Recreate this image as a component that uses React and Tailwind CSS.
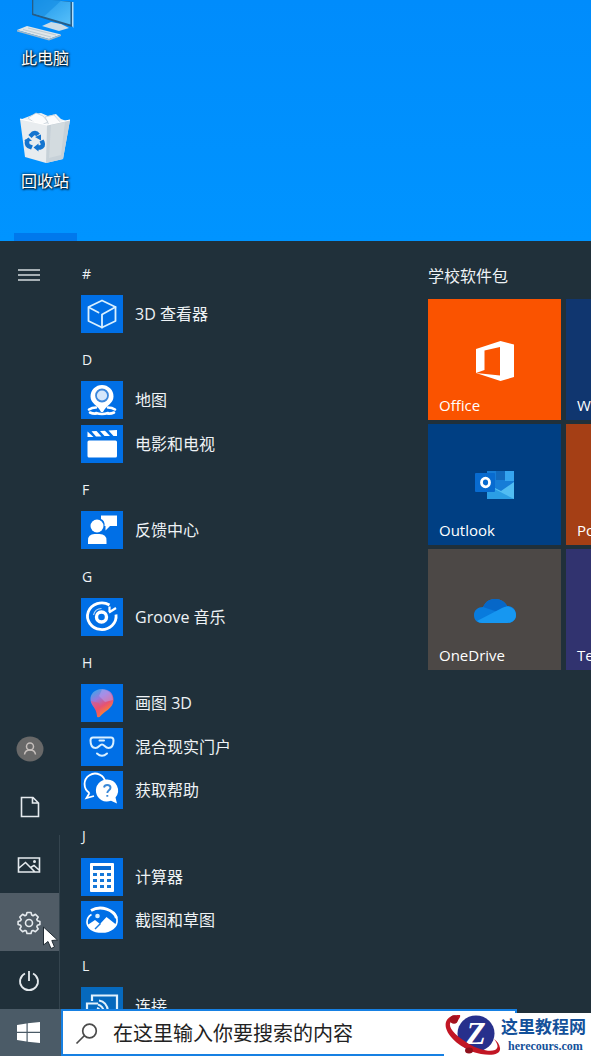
import React from "react";

const stroke = { fill: "none", stroke: "#fff", strokeWidth: 2, strokeLinejoin: "round", strokeLinecap: "round" };

/* App glyphs share a 42 x 38 canvas, the size of the blue plate. */
const glyphs = {
  viewer: (
    <g {...stroke} stroke="#d9f0ff" strokeWidth="1.8">
      <path d="M21 5.500 34.500 12V26L21 32.500 7.500 26V12Z" />
      <path d="M34.500 12 21 19.500V32.500M8 12.500 17.500 17.500" />
    </g>
  ),
  maps: (
    <g>
      <g stroke="#fff" strokeWidth="2.600" strokeLinecap="round" fill="none">
        <path d="M8 28.500Q11 26.500 15 26.500M27 26.500Q31 26.500 34 28.500M9 31.500Q12 33 16 32.500M33 31.500Q30 33 26 32.500M15 32Q21 34 27 32" />
      </g>
      <path d="M21 4a11.500 11.500 0 0 0-11.500 11.500C9.500 23 17 24 20 31h2C25 24 32.500 23 32.500 15.500A11.500 11.500 0 0 0 21 4Z" fill="#fff" />
      <circle cx="21" cy="14.500" r="6" fill="#d5e7fb" stroke="#3b87dc" strokeWidth="1.800" />
    </g>
  ),
  movies: (
    <g fill="#fff">
      <rect x="6.500" y="15.500" width="29.500" height="17" rx="1.500" />
      <path d="M6.500 6.500 12.500 12H6.500ZM10.500 6.200 15.500 6 20.500 11.500H15ZM19 5.900 24 5.700 29 11H23.500ZM27.500 5.500 36 5V11H32.500Z" />
    </g>
  ),
  feedback: (
    <g fill="#fff">
      <circle cx="16" cy="15" r="6.500" />
      <path d="M7 33v-3.500q0-6.500 6.500-6.500h5Q25.500 23 25.500 29.500V33Z" />
      <path d="M20 4.500H36V15H29L24.500 19.500V15H23.500Q24 9.500 20 8Z" />
    </g>
  ),
  groove: (
    <g fill="none" stroke="#fff">
      <path d="M28.500 7A14.300 13.300 0 1 0 35 16.500" strokeWidth="2.800" />
      <circle cx="20.500" cy="19" r="5" strokeWidth="3.400" />
      <path d="M28.500 8.500V14M28 14.500 35 10" strokeWidth="2.200" />
      <path d="M12.500 17A8.500 8.500 0 0 1 20.500 10.500" strokeWidth="1.200" opacity=".7" />
    </g>
  ),
  paint: (
    <g>
      <defs>
        <linearGradient id="balloon" x1="0" y1="0" x2=".5" y2="1">
          <stop offset="0" stopColor="#24b3ef" />
          <stop offset=".4" stopColor="#9878dc" />
          <stop offset=".68" stopColor="#e65273" />
          <stop offset="1" stopColor="#ff8a24" />
        </linearGradient>
      </defs>
      <path d="M21 5C13.500 5 9 10 9.500 16c.5 6 6 7.500 6.500 16 .2 1.800 2 1.500 3 .5 4-5 13-8 13.500-16C33 10 28.500 5 21 5Z" fill="url(#balloon)" />
      <path d="M21 5.500c5.500 0 10.500 4 11 10.500l-8 2-6-6Z" fill="#b9a2ef" opacity=".5" />
      <path d="M10 17l8 2 1 13-2.500 1C16 24 11 23 10 17Z" fill="#f24d67" opacity=".5" />
    </g>
  ),
  reality: (
    <g fill="none" stroke="#d9f0ff" strokeWidth="2" strokeLinecap="round">
      <path d="M12 9.500H30q2.500 0 2.500 3c0 5-2 7.500-5 7.500-3.500 0-4-3.500-6.500-3.500S18 20 14.500 20c-3 0-5-2.500-5-7.500 0-2 .7-3 2.500-3Z" />
      <path d="M18.500 12.500h4.500M16 25.500Q21 30 26 25.500" />
    </g>
  ),
  help: (
    <g>
      <path d="M8.500 22A10.500 10.500 0 1 1 24.500 12M8.500 22 5.500 27 13 25" fill="none" stroke="#fff" strokeWidth="1.800" />
      <path d="M26 8.500a11 11 0 1 0 4 21.200L36 32.500 34.500 26.500A11 11 0 0 0 26 8.500Z" fill="#fff" />
      <path d="M23 16.500q.5-2.500 3.200-2.500 3.300 0 3.300 2.800c0 2.500-3.200 2.500-3.200 5.200M26.300 24v1.800" fill="none" stroke="#3a88d8" strokeWidth="1.900" />
    </g>
  ),
  calculator: (
    <g>
      <rect x="9" y="5" width="24" height="29" rx="1" fill="#fff" />
      <rect x="12" y="8" width="18" height="4" fill="#086ad1" />
      <g fill="#1678d8">
        <path d="M12 15h4v3h-4zM19 15h4v3h-4zM26 15h4v3h-4zM12 21h4v3h-4zM19 21h4v3h-4zM26 21h4v3h-4zM12 27h4v3h-4zM19 27h4v3h-4zM26 27h4v3h-4z" />
      </g>
    </g>
  ),
  snip: (
    <g>
      <path d="M12.500 8.500C21 5 34 9 36 18c1 8-7 13-15 13-9 0-15-4-15-10 0-3 2-6 4.500-7.500" fill="none" stroke="#fff" strokeWidth="1.700" />
      <path d="M10 9.500C20 4 33 9 35.500 17" fill="none" stroke="#fff" strokeWidth="3" />
      <path d="M6.500 24 14 19l5 4 6.500-7L35 23.500C31 33 12 34 6.500 24Z" fill="#fff" />
      <path d="m14 28 5.500-5.500" stroke="#1478dc" strokeWidth="1.500" />
      <circle cx="16.500" cy="15" r="2.300" fill="#d9efff" />
    </g>
  ),
  connect: (
    <g fill="none" stroke="#e2f1fc" strokeWidth="2.200">
      <path d="M11 14V8.500H36V29H27M17 16.500H6V29H17" />
      <path d="M18 13.500Q26 15 27 24M17 17.500Q22 19 23 25M16 21q3 1 3.500 5" strokeWidth="2" />
    </g>
  ),
};

const rows = [
  { header: "#" },
  { name: "3D 查看器", icon: "viewer" },
  { header: "D" },
  { name: "地图", icon: "maps" },
  { name: "电影和电视", icon: "movies" },
  { header: "F" },
  { name: "反馈中心", icon: "feedback" },
  { header: "G" },
  { name: "Groove 音乐", icon: "groove" },
  { header: "H" },
  { name: "画图 3D", icon: "paint" },
  { name: "混合现实门户", icon: "reality" },
  { name: "获取帮助", icon: "help" },
  { header: "J" },
  { name: "计算器", icon: "calculator" },
  { name: "截图和草图", icon: "snip" },
  { header: "L" },
  { name: "连接", icon: "connect" },
];

function ComputerIcon() {
  return (
    <svg width="60" height="42" viewBox="0 0 60 42" aria-hidden="true">
      <defs>
        <linearGradient id="screen" x1="0" y1="0" x2="1" y2="1">
          <stop offset="0" stopColor="#1793ea" />
          <stop offset="1" stopColor="#58c0fa" />
        </linearGradient>
      </defs>
      <path d="M36 22 46 24 54 28 44 31 27 26Z" fill="#c9dce8" />
      <path d="M17-2 58 2 57 27 17 15Z" fill="#265d87" />
      <path d="M18.500-2 55.500 2V24.500L18.500 13.500Z" fill="url(#screen)" />
      <path d="M18.500-2H49L29 16.500 18.500 13.500Z" fill="#168de4" opacity=".65" />
      <path d="M57 2h1.500v26L57 26Z" fill="#b0dcf8" />
      <path d="m2 30 10-4 34 8.500L34 39Z" fill="#e0e6e9" />
      <path d="m2 30 32 9 12-4.500V36l-12 4.500L2 31.500Z" fill="#a6bac7" />
      <path d="m8 29.500 28 7.500M13 28l28 7" stroke="#bccbd3" strokeWidth="1" />
    </svg>
  );
}

function BinIcon() {
  return (
    <svg width="52" height="54" viewBox="0 0 52 54" aria-hidden="true">
      <path d="m3 8 13-5 6-1 7 3 8-2 5 5 8 3-10 8-32-3Z" fill="#eef2f5" />
      <path d="m9 7 8-5 7 3 5 6-9 4ZM26 6l9-2 7 8-11 4Z" fill="#fbfcfd" stroke="#c8d1d8" strokeWidth=".8" />
      <path d="M1 8 28 14 51 9 44 48 27 52 6 46Z" fill="#e8ecef" />
      <path d="M28 14 51 9 44 48 27 52Z" fill="#c7d1d8" />
      <path d="M32 14 46 11 42 44 30 47Z" fill="#dbe1e5" opacity=".6" />
      <path d="M1 8 28 14 51 9" fill="none" stroke="#fff" strokeWidth="1.200" />
      <g fill="none" stroke="#1474cf" strokeWidth="4.500">
        <path d="M11 25.500 14 22.500q3-1.500 5 1.500M8.500 29q-1.500 4 1 6l3.500 1.500M18 36.500h3q4-1 2.500-5l-1-2" />
      </g>
      <path d="m16 26 6-2.500v6ZM5 30l4.500-3.500 3.500 3.500ZM19.500 32.500v8l-5-4Z" fill="#1474cf" />
    </svg>
  );
}

function DesktopItem({ label, children }) {
  return (
    <button className="flex w-[90px] flex-col items-center gap-1 text-base leading-6 text-white [text-shadow:1px_1px_2px_#000,0_0_3px_#000]">
      {children}
      <span>{label}</span>
    </button>
  );
}

function AppRow({ name, icon }) {
  return (
    <li className="flex items-center">
      <button className="flex items-center gap-3 whitespace-nowrap text-base leading-6 text-[#eef2f5]">
        <svg
          width="42"
          height="38"
          viewBox="0 0 42 38"
          aria-hidden="true"
          className={icon === "connect" ? "bg-[#0669bd]" : "bg-[#006fe6]"}
        >
          {glyphs[icon]}
        </svg>
        <span>{name}</span>
      </button>
    </li>
  );
}

function RailButton({ label, active, children }) {
  return (
    <button
      aria-label={label}
      className={`relative flex h-[58px] w-full items-center justify-center pr-px pt-0.5 ${active ? "bg-[#505c66]" : ""}`}
    >
      {children}
    </button>
  );
}

function Rail() {
  const line = { fill: "none", stroke: "#e5eaee", strokeWidth: 1.6 };
  return (
    <nav aria-label="开始" className="flex w-[60px] shrink-0 flex-col justify-between">
      <button aria-label="展开" className="flex h-[68px] items-center justify-center pr-0.5">
        <svg width="22" height="14" viewBox="0 0 22 14" aria-hidden="true">
          <path d="M0 2H22M0 7H22M0 12H22" stroke="#d4dade" strokeWidth="1.500" />
        </svg>
      </button>
      <div>
        <RailButton label="用户">
          <svg width="28" height="26" viewBox="0 0 28 26" aria-hidden="true">
            <ellipse cx="14" cy="13" rx="13.500" ry="12.500" fill="#686868" />
            <g fill="none" stroke="#c5bebb" strokeWidth="1.500">
              <circle cx="14" cy="10.500" r="3.500" />
              <path d="M8.500 18.500Q9 14 14 14t5.500 4.500" />
            </g>
          </svg>
        </RailButton>
        <RailButton label="文档">
          <svg width="20" height="22" viewBox="0 0 20 22" aria-hidden="true" {...line}>
            <path d="M1.500 1.500H13L18.500 7V20.500H1.500ZM12.500 1.500V7H18.500" />
          </svg>
        </RailButton>
        <div className="border-r border-[#34444e]">
          <RailButton label="图片">
            <svg width="24" height="18" viewBox="0 0 24 18" aria-hidden="true" {...line}>
              <path d="M1.500 2H22.500V16H1.500ZM2 12 8.500 6.500 18 16M13.500 11.500 17 9.500 22 14" />
              <circle cx="17.500" cy="5.500" r=".7" />
            </svg>
          </RailButton>
          <RailButton label="设置" active>
            <svg width="24" height="24" viewBox="0 0 24 24" aria-hidden="true" {...line}>
              <path d="m9.300 4.100.7-2.600h4l.7 2.600 1.300.6 2.400-1.400 2.800 2.800-1.400 2.300.6 1.400 2.500.7v3l-2.500.8-.6 1.400 1.400 2.300-2.800 2.700-2.400-1.300-1.300.6-.7 2.500h-4l-.7-2.500-1.300-.6-2.400 1.300-2.800-2.700 1.400-2.300-.6-1.400-2.500-.8v-3l2.500-.7.6-1.400-1.400-2.300 2.800-2.800L8 4.700Z" strokeLinejoin="round" />
              <circle cx="12" cy="12" r="3.500" />
            </svg>
            <svg width="17" height="24" viewBox="0 0 17 24" aria-hidden="true" className="absolute left-[42px] top-[33px] z-10">
              <path d="M1.500 1V19L6 15.500 9 22.500 12.500 21 9.800 14.500 15.500 14Z" fill="#fff" stroke="#222d35" />
            </svg>
          </RailButton>
          <RailButton label="电源">
            <svg width="22" height="22" viewBox="0 0 22 22" aria-hidden="true" {...line} strokeWidth="1.800">
              <path d="M7 3.500A9 8.800 0 1 0 15 3.500M11 1V11" />
            </svg>
          </RailButton>
        </div>
      </div>
    </nav>
  );
}

function Tile({ label, color, children }) {
  return (
    <button className={`flex h-[121px] flex-col justify-between px-[11px] pb-[5px] text-left text-[15px] leading-5 text-white ${color}`}>
      <span className="flex w-full flex-1 items-center justify-center pt-[27px]">{children}</span>
      <span>{label}</span>
    </button>
  );
}

function Tiles() {
  return (
    <section className="min-w-0 flex-1 overflow-hidden pt-[23px]">
      <h2 className="mb-[11px] text-base leading-6 text-[#eef2f5]">学校软件包</h2>
      <div className="grid grid-cols-[133px_133px] gap-x-[5px] gap-y-1">
        <Tile label="Office" color="bg-[#fa5300]">
          <svg width="40" height="42" viewBox="0 0 40 42" aria-hidden="true">
            <path d="M1 9 25.500 1 39 4.500V37L25.500 41 1 33 25 35.500V7L9.500 10.500V30L1 33Z" fill="#fff" />
          </svg>
        </Tile>
        <Tile label="Word" color="bg-[#10366f]" />
        <Tile label="Outlook" color="bg-[#003f83]">
          <svg width="40" height="32" viewBox="0 0 40 32" aria-hidden="true">
            <path d="M12 1H39V29H12Z" fill="#167dd7" />
            <path d="M21 1h9v9h-9z" fill="#1269bd" />
            <path d="M30 1h9v10h-9z" fill="#35a4ef" />
            <path d="M12 14 26 21 39 12V29H12Z" fill="#51bdf3" />
            <path d="m12 15 27 14H12Z" fill="#2b9ee4" />
            <rect x="0" y="3" width="20" height="19" rx="1" fill="#086bd0" />
            <ellipse cx="10.500" cy="12.500" rx="4" ry="4.300" fill="none" stroke="#fff" strokeWidth="2.800" />
          </svg>
        </Tile>
        <Tile label="PowerPoint" color="bg-[#a53f15]" />
        <Tile label="OneDrive" color="bg-[#4c4846]">
          <svg width="44" height="26" viewBox="0 0 44 26" aria-hidden="true">
            <path d="M9 25C3 25 1 21 1 17c0-5 4-8 9-8C13 3 17 1 22 1c6 0 10 3 12 7 6 0 9 4 9 9 0 5-4 8-9 8Z" fill="#087bdd" />
            <path d="M10 9C13 3 17 1 22 1c6 0 10 3 12 7l-9 6Z" fill="#0667c8" />
            <path d="M4 23 29 10q3-2 6-1.500c5 1 8 4 8 8.500 0 5-4 8-9 8H9q-3 0-5-2Z" fill="#1697f1" />
          </svg>
        </Tile>
        <Tile label="Teams" color="bg-[#31336f]" />
      </div>
    </section>
  );
}

function Taskbar() {
  return (
    <footer className="relative flex h-[47px] shrink-0 bg-[#20303a]">
      <button aria-label="开始菜单" className="flex w-[61px] shrink-0 items-center justify-center bg-[#4b5b67] pr-1">
        <svg width="23" height="21" viewBox="0 0 23 21" aria-hidden="true" fill="#fff">
          <path d="M0 3 9.500 1.500V9.800H0ZM10.700 1.300 23 0V9.800H10.700ZM0 11H9.500V19.500L0 18ZM10.700 11H23V21L10.700 19.700Z" />
        </svg>
      </button>
      <label className="mr-[74px] flex min-w-0 flex-1 items-center gap-[15px] border-2 border-[#1680e3] bg-white pl-3 pt-0.5">
        <svg width="23" height="22" viewBox="0 0 23 22" role="img" aria-label="搜索" fill="none" stroke="#4b4b4b" strokeWidth="1.700">
          <circle cx="14.500" cy="8" r="6.800" />
          <path d="M9.500 12.500 1.500 20.500" />
        </svg>
        <input
          type="text"
          placeholder="在这里输入你要搜索的内容"
          className="min-w-0 flex-1 bg-transparent text-xl leading-7 text-[#222] outline-none placeholder:text-[#222] placeholder:opacity-100"
        />
      </label>
      <a href="#herecours" className="absolute bottom-0 right-0 flex h-[43px] w-[147px] items-center bg-white">
        <svg width="57" height="43" viewBox="0 0 57 43" className="shrink-0" aria-hidden="true">
          <ellipse cx="32" cy="20.500" rx="18.500" ry="18" fill="#27308c" />
          <text x="32" y="31" textAnchor="middle" fill="#fff" fontFamily="Liberation Serif" fontSize="32" fontWeight="700" fontStyle="italic">
            Z
          </text>
          <path d="M16 2C6 1 0 7 2 15c3 11 19 23 35 26 12 2 20 0 19-6-.5-4-3-7-6-9 4 5 5 9 1 11-5 2-16 0-26-6C13 24 5 16 6 11c0-2 2-3 5-2 3-1 6-5 5-7Z" fill="#c21624" />
          <circle cx="10" cy="6.500" r="4.200" fill="#a3121e" />
          <ellipse cx="25" cy="37.500" rx="4" ry="3" fill="#8e101c" />
        </svg>
        <span className="flex flex-col items-center whitespace-nowrap font-bold text-[#14519a]">
          <span className="text-[17px] leading-[22px]">这里教程网</span>
          <span className="pl-1 font-['Liberation_Serif',serif] text-xs leading-4">herecours.com</span>
        </span>
      </a>
    </footer>
  );
}

export default function App() {
  return (
    <div className="flex h-screen flex-col overflow-hidden bg-[#20303a] font-['Open_Sans','Noto_Sans_CJK_SC',sans-serif]">
      <main className="flex h-[241px] shrink-0 flex-col items-start justify-between bg-linear-to-b from-[#008cfc] to-[#0094ff]">
        <DesktopItem label="此电脑">
          <ComputerIcon />
        </DesktopItem>
        <DesktopItem label="回收站">
          <BinIcon />
        </DesktopItem>
        <div className="ml-[14px] h-2 w-[63px] bg-[#0078ec]" />
      </main>
      <div className="flex min-h-0 flex-1">
        <Rail />
        <ul className="ml-[21px] grid h-[787px] w-[347px] shrink-0 auto-rows-fr pt-2">
          {rows.map((row) =>
            row.header ? (
              <li key={row.header} className="flex items-center pl-px pt-1.5 text-sm leading-5 text-[#eef2f5]">
                <h2>{row.header}</h2>
              </li>
            ) : (
              <AppRow key={row.name} {...row} />
            ),
          )}
        </ul>
        <Tiles />
      </div>
      <Taskbar />
    </div>
  );
}
